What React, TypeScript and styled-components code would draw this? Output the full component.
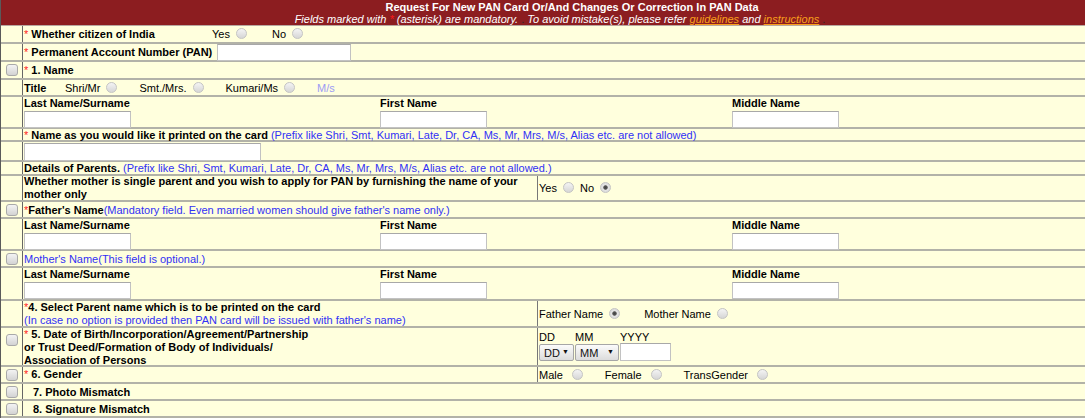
import React from "react";
import styled, { createGlobalStyle } from "styled-components";

const GlobalStyle = createGlobalStyle`
  html, body {
    margin: 0;
    padding: 0;
    background: #ffffff;
    overflow: hidden;
  }
`;

const Sheet = styled.div`
  width: 1142px;
  border-left: 1px solid #5a5a5a;
  background: #ffffdd;
  font-family: "Liberation Sans", Arial, sans-serif;
  font-size: 11px;
  color: #000;
`;

const Header = styled.div`
  height: 26px;
  box-sizing: border-box;
  padding-top: 1px;
  background: #8c1d20;
  border-bottom: 1px solid #b8a8a0;
  color: #fff;
  text-align: center;
  line-height: 12px;
`;

const HeadTitle = styled.div`
  font-weight: bold;
`;

const HeadNote = styled.div`
  font-style: italic;
  padding-right: 24px;
`;

const HeadLink = styled.a`
  color: #f9a01b;
  text-decoration: underline;
`;

const Dot = styled.span`
  color: #2a2a2a;
  font-style: normal;
`;

const Row = styled.div<{ $h: number }>`
  display: flex;
  height: ${(p) => p.$h}px;
  box-sizing: border-box;
  border-bottom: 2px solid #b2b2a8;
`;

const Side = styled.div<{ $top?: boolean }>`
  width: 22px;
  flex: none;
  box-sizing: border-box;
  border-right: 1px solid #666;
  display: flex;
  justify-content: center;
  align-items: ${(p) => (p.$top ? "flex-start" : "center")};
  padding-top: ${(p) => (p.$top ? "6px" : "0")};
`;

const Main = styled.div`
  flex: 1;
  min-width: 0;
  display: flex;
  align-items: center;
  padding: 1px 1px 0;
  line-height: 13px;
  white-space: nowrap;
`;

const Check = styled.input.attrs({ type: "checkbox" })`
  appearance: none;
  margin: 0;
  width: 12px;
  height: 12px;
  border: 1px solid #a9a9a9;
  border-radius: 3px;
  background: linear-gradient(#f3f3f3, #d3d3d3);
  box-sizing: border-box;
`;

const Radio = styled.input.attrs({ type: "radio" })<{ $after?: number }>`
  appearance: none;
  margin: 0 ${(p) => p.$after ?? 22}px 0 6px;
  width: 11px;
  height: 11px;
  border-radius: 50%;
  border: 1px solid #c4c4c4;
  box-sizing: border-box;
  background: linear-gradient(#f4f4f4, #d6d6d6);
  vertical-align: middle;
  position: relative;
  top: -1px;

  &:checked {
    background: radial-gradient(circle, #444 0, #555 1.8px, #e6e6e6 2.6px, #d0d0d0 100%);
  }
`;

const Star = styled.span`
  color: #ff1a1a;
  font-weight: normal;
`;

const Bold = styled.span<{ $w?: number }>`
  font-weight: bold;
  display: inline-block;
  width: ${(p) => (p.$w ? `${p.$w}px` : "auto")};
`;

const Hint = styled.span<{ $faded?: boolean }>`
  color: ${(p) => (p.$faded ? "#9b9bf5" : "#3131f5")};
`;

const Indent = styled.span`
  padding-left: 9px;
  font-weight: bold;
`;

const TextBox = styled.input<{ $w: number; $h?: number }>`
  width: ${(p) => p.$w}px;
  height: ${(p) => p.$h ?? 17}px;
  box-sizing: border-box;
  margin: 0;
  padding: 0 2px;
  border: 1px solid #c2c2c2;
  border-top-color: #a8a8a8;
  background: #fff;
`;

const NameGrid = styled.div`
  display: grid;
  grid-template-columns: 356px 352px 1fr;
  align-self: stretch;
  width: 100%;
  margin-top: -1px;
`;

const Field = styled.div`
  display: flex;
  flex-direction: column;
  align-items: flex-start;
  gap: 1px;
`;

const FieldLabel = styled.div`
  font-weight: bold;
  line-height: 13px;
`;

const SplitLeft = styled.div<{ $top?: boolean }>`
  width: 515px;
  flex: none;
  align-self: stretch;
  box-sizing: border-box;
  border-right: 1px solid #777;
  display: flex;
  flex-direction: column;
  justify-content: ${(p) => (p.$top ? "flex-start" : "center")};
  padding-left: 1px;
  margin: -1px 0 0 -1px;
`;

const SplitRight = styled.div<{ $top?: boolean }>`
  flex: 1;
  align-self: stretch;
  display: flex;
  flex-direction: ${(p) => (p.$top ? "column" : "row")};
  align-items: ${(p) => (p.$top ? "flex-start" : "center")};
  padding: ${(p) => (p.$top ? "2px 0 0 1px" : "0 0 0 1px")};
`;

const DateLabels = styled.div`
  display: flex;
  line-height: 13px;
`;

const DateLabel = styled.span<{ $w: number }>`
  width: ${(p) => p.$w}px;
`;

const DateControls = styled.div`
  display: flex;
  align-items: flex-start;
  gap: 1px;
`;

const SelectWrap = styled.span`
  position: relative;
  display: inline-block;
`;

const Select = styled.select<{ $w: number }>`
  appearance: none;
  width: ${(p) => p.$w}px;
  height: 17px;
  margin: 0;
  padding: 0 0 0 4px;
  border: 1px solid #a6a6a6;
  border-radius: 2px;
  background: linear-gradient(#fbfbfb, #dcdcdc);
  font-family: "Liberation Sans", Arial, sans-serif;
  font-size: 11px;
  color: #111;
`;

const Arrow = styled.span`
  position: absolute;
  right: 5px;
  top: 3px;
  font-size: 7px;
  line-height: 10px;
  color: #111;
  pointer-events: none;
`;

const Names = ({ ids }: { ids: string }) => (
  <NameGrid>
    <Field>
      <FieldLabel>Last Name/Surname</FieldLabel>
      <TextBox $w={107} id={`${ids}-last`} />
    </Field>
    <Field>
      <FieldLabel>First Name</FieldLabel>
      <TextBox $w={107} id={`${ids}-first`} />
    </Field>
    <Field>
      <FieldLabel>Middle Name</FieldLabel>
      <TextBox $w={107} id={`${ids}-middle`} />
    </Field>
  </NameGrid>
);

const prefixNote =
  "(Prefix like Shri, Smt, Kumari, Late, Dr, CA, Ms, Mr, Mrs, M/s, Alias etc. are not allowed";

export default function App() {
  return (
    <>
      <GlobalStyle />
      <Sheet>
        <Header>
          <HeadTitle>Request For New PAN Card Or/And Changes Or Correction In PAN Data</HeadTitle>
          <HeadNote>
            Fields marked with <Star>*</Star> (asterisk) are mandatory. <Dot>.</Dot> To avoid
            mistake(s), please refer <HeadLink>guidelines</HeadLink> and{" "}
            <HeadLink>instructions</HeadLink> <Dot>.</Dot>
          </HeadNote>
        </Header>

        <Row $h={18}>
          <Side />
          <Main>
            <Bold $w={188}>
              <Star>*</Star> Whether citizen of India
            </Bold>
            Yes<Radio name="citizen" $after={25} />
            No<Radio name="citizen" />
          </Main>
        </Row>

        <Row $h={18}>
          <Side />
          <Main>
            <Bold>
              <Star>*</Star> Permanent Account Number (PAN)
            </Bold>
            <TextBox $w={134} style={{ marginLeft: 5 }} />
          </Main>
        </Row>

        <Row $h={18}>
          <Side>
            <Check />
          </Side>
          <Main>
            <Bold>
              <Star>*</Star> 1. Name
            </Bold>
          </Main>
        </Row>

        <Row $h={17}>
          <Side />
          <Main>
            <Bold $w={41}>Title</Bold>
            Shri/Mr<Radio name="title" />
            Smt./Mrs.<Radio name="title" />
            Kumari/Ms<Radio name="title" />
            <Hint $faded>M/s</Hint>
          </Main>
        </Row>

        <Row $h={32}>
          <Side />
          <Main>
            <Names ids="applicant" />
          </Main>
        </Row>

        <Row $h={13}>
          <Side />
          <Main>
            <Bold>
              <Star>*</Star> Name as you would like it printed on the card
            </Bold>
            &nbsp;<Hint>{prefixNote})</Hint>
          </Main>
        </Row>

        <Row $h={20}>
          <Side />
          <Main>
            <TextBox $w={237} $h={18} />
          </Main>
        </Row>

        <Row $h={14}>
          <Side />
          <Main>
            <Bold>Details of Parents.</Bold>&nbsp;<Hint>{prefixNote}.)</Hint>
          </Main>
        </Row>

        <Row $h={26}>
          <Side />
          <Main>
            <SplitLeft>
              <Bold>
                Whether mother is single parent and you wish to apply for PAN by furnishing the
                name of your
                <br />
                mother only
              </Bold>
            </SplitLeft>
            <SplitRight>
              Yes<Radio name="single" $after={6} />
              No<Radio name="single" defaultChecked />
            </SplitRight>
          </Main>
        </Row>

        <Row $h={17}>
          <Side>
            <Check />
          </Side>
          <Main>
            <Star>*</Star>
            <Bold>Father's Name</Bold>
            <Hint>(Mandatory field. Even married women should give father's name only.)</Hint>
          </Main>
        </Row>

        <Row $h={32}>
          <Side />
          <Main>
            <Names ids="father" />
          </Main>
        </Row>

        <Row $h={17}>
          <Side>
            <Check />
          </Side>
          <Main>
            <Hint>Mother's Name(This field is optional.)</Hint>
          </Main>
        </Row>

        <Row $h={33}>
          <Side />
          <Main>
            <Names ids="mother" />
          </Main>
        </Row>

        <Row $h={27}>
          <Side />
          <Main>
            <SplitLeft>
              <div>
                <Star>*</Star>
                <Bold>4. Select Parent name which is to be printed on the card</Bold>
              </div>
              <Hint>(In case no option is provided then PAN card will be issued with father's name)</Hint>
            </SplitLeft>
            <SplitRight>
              Father Name<Radio name="parent" defaultChecked $after={24} />
              Mother Name<Radio name="parent" />
            </SplitRight>
          </Main>
        </Row>

        <Row $h={39}>
          <Side $top>
            <Check />
          </Side>
          <Main>
            <SplitLeft $top>
              <Bold>
                <Star>*</Star> 5. Date of Birth/Incorporation/Agreement/Partnership
                <br />
                or Trust Deed/Formation of Body of Individuals/
                <br />
                Association of Persons
              </Bold>
            </SplitLeft>
            <SplitRight $top>
              <DateLabels>
                <DateLabel $w={36}>DD</DateLabel>
                <DateLabel $w={45}>MM</DateLabel>
                <DateLabel $w={40}>YYYY</DateLabel>
              </DateLabels>
              <DateControls>
                <SelectWrap>
                  <Select $w={35} defaultValue="DD">
                    <option>DD</option>
                  </Select>
                  <Arrow>▼</Arrow>
                </SelectWrap>
                <SelectWrap>
                  <Select $w={44} defaultValue="MM">
                    <option>MM</option>
                  </Select>
                  <Arrow>▼</Arrow>
                </SelectWrap>
                <TextBox $w={51} $h={18} style={{ marginTop: -1 }} />
              </DateControls>
            </SplitRight>
          </Main>
        </Row>

        <Row $h={17}>
          <Side>
            <Check />
          </Side>
          <Main>
            <SplitLeft>
              <Bold>
                <Star>*</Star> 6. Gender
              </Bold>
            </SplitLeft>
            <SplitRight>
              Male<Radio name="gender" $after={22} style={{ marginLeft: 9 }} />
              Female<Radio name="gender" $after={22} style={{ marginLeft: 9 }} />
              TransGender<Radio name="gender" style={{ marginLeft: 9 }} />
            </SplitRight>
          </Main>
        </Row>

        <Row $h={17}>
          <Side>
            <Check />
          </Side>
          <Main>
            <Indent>7. Photo Mismatch</Indent>
          </Main>
        </Row>

        <Row $h={17}>
          <Side>
            <Check />
          </Side>
          <Main>
            <Indent>8. Signature Mismatch</Indent>
          </Main>
        </Row>
      </Sheet>
    </>
  );
}
